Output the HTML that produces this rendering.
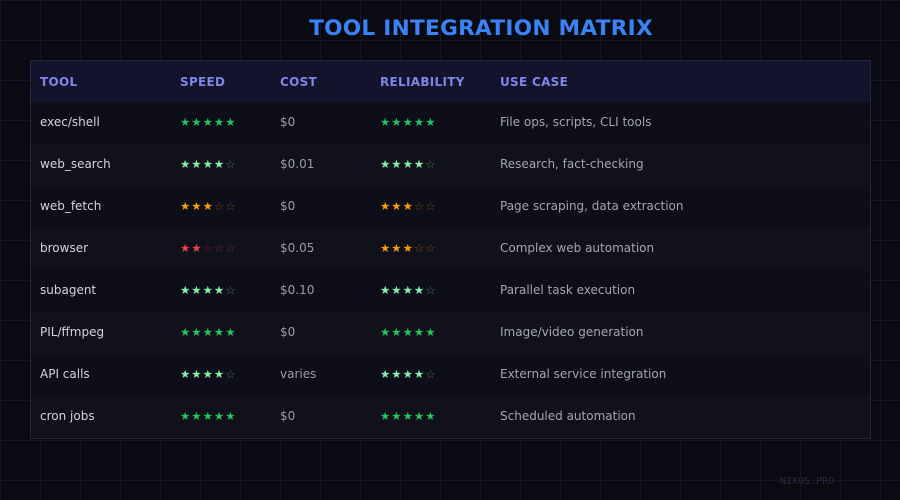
<!DOCTYPE html>
<html><head><meta charset="utf-8"><style>
body{margin:0;width:900px;height:500px;overflow:hidden;background:#0a0a12;font-family:"DejaVu Sans","Liberation Sans",sans-serif;position:relative;
background-image:linear-gradient(#161628 1px,transparent 1px),linear-gradient(90deg,#161628 1px,transparent 1px);background-size:40px 40px;background-position:0 0;}
h1{position:absolute;left:0;width:962px;top:16px;margin:0;text-align:center;font-size:21.6px;font-weight:bold;color:#3b82f6;letter-spacing:0.3px}
.tbl{position:absolute;left:30px;top:60px;width:841px;height:379px;border:1px solid #25253d;box-sizing:border-box;background:#0e0e1a;overflow:hidden}
.row{height:42px;position:relative;font-size:12px}
.row div{position:absolute;top:0;line-height:40px;white-space:nowrap}
.hd{background:#13132b;height:41px}
.hd div{color:#7f86e8;font-weight:bold;font-size:12px;letter-spacing:0.3px;line-height:42px}
.r1{background:#0e0e1a}.r2{background:#11111b}
.c1{left:9px;color:#d4d4dc}.c2{left:149px}.c3{left:249px;color:#9a9ca8}.c4{left:349px}.c5{left:469px;color:#a3a5b0}
.g{color:#22c55e}.gd{color:#22c55e;opacity:.35}
.l{color:#86efac}.ld{color:#86efac;opacity:.45}
.o{color:#f59e0b}.od{color:#f59e0b;opacity:.45}
.r{color:#ef4444}.rd{color:#ef4444;opacity:.45}
.s{font-size:11.5px;letter-spacing:1px}
.wm{position:absolute;left:780px;top:476px;font-family:"DejaVu Sans Mono",monospace;font-size:10px;color:#2a2a40}
</style></head><body>
<h1>TOOL INTEGRATION MATRIX</h1>
<div class="tbl">
<div class="row hd"><div class="c1" style="color:#7f86e8">TOOL</div><div class="c2">SPEED</div><div class="c3" style="color:#7f86e8">COST</div><div class="c4">RELIABILITY</div><div class="c5" style="color:#7f86e8">USE CASE</div></div>
<div class="row r1"><div class="c1">exec/shell</div><div class="c2 s g">★★★★★</div><div class="c3">$0</div><div class="c4 s g">★★★★★</div><div class="c5">File ops, scripts, CLI tools</div></div>
<div class="row r2"><div class="c1">web_search</div><div class="c2 s"><span class="l">★★★★</span><span class="ld">☆</span></div><div class="c3">$0.01</div><div class="c4 s"><span class="l">★★★★</span><span class="ld">☆</span></div><div class="c5">Research, fact-checking</div></div>
<div class="row r1"><div class="c1">web_fetch</div><div class="c2 s"><span class="o">★★★</span><span class="od">☆☆</span></div><div class="c3">$0</div><div class="c4 s"><span class="o">★★★</span><span class="od">☆☆</span></div><div class="c5">Page scraping, data extraction</div></div>
<div class="row r2"><div class="c1">browser</div><div class="c2 s"><span class="r">★★</span><span class="rd">☆☆☆</span></div><div class="c3">$0.05</div><div class="c4 s"><span class="o">★★★</span><span class="od">☆☆</span></div><div class="c5">Complex web automation</div></div>
<div class="row r1"><div class="c1">subagent</div><div class="c2 s"><span class="l">★★★★</span><span class="ld">☆</span></div><div class="c3">$0.10</div><div class="c4 s"><span class="l">★★★★</span><span class="ld">☆</span></div><div class="c5">Parallel task execution</div></div>
<div class="row r2"><div class="c1">PIL/ffmpeg</div><div class="c2 s g">★★★★★</div><div class="c3">$0</div><div class="c4 s g">★★★★★</div><div class="c5">Image/video generation</div></div>
<div class="row r1"><div class="c1">API calls</div><div class="c2 s"><span class="l">★★★★</span><span class="ld">☆</span></div><div class="c3">varies</div><div class="c4 s"><span class="l">★★★★</span><span class="ld">☆</span></div><div class="c5">External service integration</div></div>
<div class="row r2"><div class="c1">cron jobs</div><div class="c2 s g">★★★★★</div><div class="c3">$0</div><div class="c4 s g">★★★★★</div><div class="c5">Scheduled automation</div></div>
</div>
<div class="wm">NIXUS.PRO</div>
</body></html>
